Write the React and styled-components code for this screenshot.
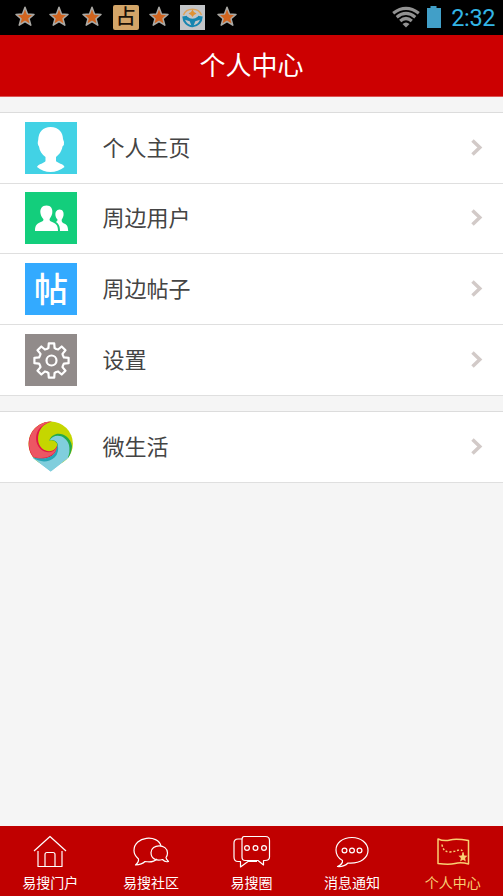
import React from "react";
import styled, { createGlobalStyle } from "styled-components";

const GlobalStyle = createGlobalStyle`
  * { box-sizing: border-box; }
  body { margin: 0; background: #f5f5f5; font-family: "Noto Sans CJK SC", sans-serif; }
`;

const Screen = styled.div`
  display: flex;
  flex-direction: column;
  width: 503px;
  height: 896px;
  overflow: hidden;
  background: #f5f5f5;
`;

const StatusBar = styled.div`
  display: flex;
  justify-content: space-between;
  height: 35px;
  padding: 0 8px 0 12px;
  background: #000;
`;

const Notices = styled.div`
  display: flex;
  gap: 7.6px;
  padding-top: 5px;
  & > * { flex: none; }
`;

const Indicators = styled.div`
  display: flex;
  align-items: flex-start;
`;

const Icon = styled.svg`
  display: block;
  flex: none;
  overflow: visible;
`;

const GlyphBadge = styled.div`
  width: 26px;
  height: 25px;
  border-radius: 2px;
  background: #d3a568;
  color: #1b1207;
  font-size: 20px;
  font-weight: 500;
  line-height: 22px;
  text-align: center;
`;

const Clock = styled.span`
  margin-left: 7px;
  color: #33b5e5;
  font: 400 23.5px/36px Roboto, sans-serif;
  letter-spacing: -0.4px;
`;

const Header = styled.header`
  height: 62px;
  border-bottom: 1px solid #dc5555;
  background: #cc0001;
  color: #fff;
  font-size: 26px;
  line-height: 58px;
  text-align: center;
`;

const Group = styled.section`
  margin-top: 15px;
  border-top: 1px solid #dcdcdc;
`;

const Row = styled.div`
  display: flex;
  align-items: center;
  height: ${(p) => (p.$short ? 70 : 71)}px;
  padding: 0 20px ${(p) => (p.$short ? 1 : 0)}px 25px;
  border-bottom: 1px solid #dfdfdf;
  background: #fff;
`;

const Tile = styled.div`
  width: 52px;
  height: 52px;
  flex: none;
  background: ${(p) => p.$color};
  color: #fff;
  font-size: 34px;
  font-weight: 500;
  line-height: 49px;
  text-align: center;
`;

const RowLabel = styled.span`
  flex: 1;
  margin-left: 25.5px;
  padding-bottom: 5px;
  color: #444;
  font-size: 22px;
  line-height: 30px;
`;

const TabBar = styled.nav`
  display: flex;
  height: 70px;
  margin-top: auto;
  background: #c00000;
`;

const Tab = styled.div`
  display: flex;
  flex: 1;
  flex-direction: column;
  align-items: center;
  padding-top: 7px;
  color: ${(p) => (p.$active ? "#f9cf72" : "#fff")};
`;

const TabLabel = styled.span`
  margin-top: 3px;
  font-size: 14px;
  line-height: 20px;
`;

const Star = () => (
  <Icon width="26" height="25" viewBox="0 -0.7 26 25">
    <path d="M13 1.500 15.500 8.300 22 8.700 17 13 18.800 19.500 13 15.800 7.200 19.500 9 13 4 8.700 10.500 8.300Z" fill="#d2641e" stroke="#aaa9a5" strokeWidth="1.500" strokeLinejoin="round" />
  </Icon>
);

const Wheel = () => (
  <Icon width="26" height="25" viewBox="0 0 26 25">
    <path fill="#c3c5c8" d="M0 0h25v25H0z" />
    <path d="M3.500 10A9.500 8.500 0 0 1 21.500 10" fill="none" stroke="#dda35b" strokeWidth="1.500" />
    <path d="M2.300 11.500Q12.500 9.500 22.700 11.500A10.200 10.700 0 0 1 2.300 11.500Z" fill="#1685b0" />
    <path d="M5 14.800 9.700 16.300 11.300 20.300Q7 19.500 5 14.800ZM20 14.800 15.300 16.300 13.700 20.300Q18 19.500 20 14.800Z" fill="#c3c5c8" />
    <path d="M7 11.500Q12.500 16 18 11.500V9H7Z" fill="#c3c5c8" />
    <path d="m12.500 4.500 1.500 2.400 2.500 1.500-2.500 1.500-1.500 2-1.500-2-2.500-1.500 2.500-1.500Z" fill="#df9235" />
  </Icon>
);

const Wifi = () => (
  <Icon width="30" height="35" viewBox="-1 0 30 35">
    <g fill="none" stroke="#929292" strokeWidth="3.200">
      <path d="M2.200 13.200Q15 3.500 27.800 13.200" />
      <path d="M5.700 17.200Q15 9.700 24.300 17.200" />
      <path d="M9.200 21Q15 16 20.800 21" />
    </g>
    <path d="M11.500 24Q15 21 18.500 24L15 27.500Z" fill="#929292" />
  </Icon>
);

const Battery = () => (
  <Icon width="24" height="35" viewBox="0 0 24 35">
    <path d="M7 8h3.500V6h6v2H21v20H7Z" fill="#419fc8" />
  </Icon>
);

const Person = () => (
  <Icon width="52" height="52" viewBox="0 0 52 52">
    <path fill="#fff" d="M25.500 5C34 5 38 11 38 17L39 20Q39.500 23 37.500 24.500C36.500 30 34 32.500 31 35V39C32 41 39 42 39.500 45Q33 50 25.500 50T12 45C13 42 20 41 20.500 39V35C17 32.500 14.500 29 14 24.500Q12 22 13.200 18C13.500 10 18 5 25.500 5Z" />
  </Icon>
);

const People = () => (
  <Icon width="52" height="52" viewBox="0 0 52 52">
    <path fill="#fff" d="M21.500 13.500C26 13.500 28 17 27.200 21.500 26.500 24.500 25 26 24.500 27.200Q24.500 29 26 29.600C31 31.500 33 33 33 39H10C10 33 12 31.500 17 29.600Q18.500 29 18.500 27.200C17.500 26 16 24.500 15.500 21.500 14.700 17 17 13.500 21.500 13.500Z" />
    <path fill="#fff" d="M34.500 17.500C38 17.500 39 20.500 38.500 23.500 38 26 37 27 36.600 28Q36.400 30.500 38.500 31.300C42 32.500 43 34.500 43.200 39H35C35 34 33.500 31.500 30.800 30Q32.800 29 32.500 27.500C30 25 30 21 31 19.500Q32.200 17.500 34.500 17.500Z" />
  </Icon>
);

const gearOutline = (() => {
  const points = [];
  for (let i = 0; i < 8; i += 1) {
    [[-22, 12.500], [-14, 12.800], [-9, 17.300], [9, 17.300], [14, 12.800], [22, 12.500]].forEach(([offset, radius]) => {
      const angle = ((i * 45 + offset - 90) * Math.PI) / 180;
      points.push(`${(26.5 + radius * Math.cos(angle)).toFixed(2)},${(26.5 + radius * Math.sin(angle)).toFixed(2)}`);
    });
  }
  return points.join(" ");
})();

const Gear = () => (
  <Icon width="52" height="52" viewBox="0 0 52 52" fill="none" stroke="#fff" strokeWidth="2.200" strokeLinejoin="round">
    <polygon points={gearOutline} />
    <circle cx="26.500" cy="26.500" r="5" />
  </Icon>
);

const Swirl = () => (
  <Icon width="52" height="52" viewBox="0 0 52 52">
    <path d="M8 37 25.700 50.500 43.500 36.500 40 20 12 24Z" fill="#80cedd" />
    <circle cx="25.700" cy="22.700" r="22.200" fill="#c5d600" />
    <path d="M24.300 19.500C28 9 44 11 47 25Q46.500 32 43.500 36.500L30 34Z" fill="#25a94b" />
    <path d="M24.300 20C29 11.500 41 14 44 24Q45.500 31 42.500 37.500L25.700 50.500 8 37 22 36 31 30Q34.500 24 31.500 21 28 17.500 24.300 20Z" fill="#80cedd" />
    <path d="M24 19.800Q29 18 32 22.500L33 27 24 32Z" fill="#c5d600" />
    <path d="M27 .6A22.200 22.200 0 0 0 8 36C17 40 27 37 30.500 31Q32.500 27 32.300 23C31.500 29 26 31 21.500 29.800 14 27.500 12 20 13.500 13.500 15.500 6 20 2.500 27 .6Z" fill="#df1745" />
    <path d="M26 .5A22.200 22.200 0 0 0 8 35.500C17 39 27 36 30.500 30Q31.800 27.500 32 26C29.500 31 24 32.200 19.500 30.500 12.500 27.500 10 20 11.500 13.500 13.500 6.500 19 2.500 26 .5Z" fill="#ed5663" />
    <path d="M7.500 36C17 39.500 27 37 30.500 31Q32.500 27 32.300 23 35 31 29.500 36.500C23 42 14 41.500 7.500 36Z" fill="#25a4b5" />
  </Icon>
);

const Chevron = () => (
  <Icon width="14" height="20" viewBox="0 0 14 20">
    <path d="m3.500 2.500 7.300 7L3.500 16.500" fill="none" stroke="#d2cac8" strokeWidth="3.500" />
  </Icon>
);

const tabIcons = {
  home: (
    <>
      <path d="M4 18 20 3.500 36 18M8 18V33.500H32V18M15 33.500V21.500Q15 19.500 17 19.500H23Q25 19.500 25 21.500V33.500" />
    </>
  ),
  chat: (
    <>
      <path d="M30 13C27 1 3 3 3 17.500Q3 22 7.500 26 8 29 4.500 32 11 31.500 14 28.500 22 30 26 26" />
      <path d="M36.500 20C36.500 10.500 20 10.500 20 19.500 20 27 27 28 31.500 26.500Q34 29.500 37.500 28.500 35 26 35 24.500 36.500 22.500 36.500 20Z" />
    </>
  ),
  circle: (
    <>
      <path d="M13 3.500H34.500Q38.500 3.500 38.500 7.500V24Q38.500 27.500 34 27.500H32.500V32L27 27.500H14Q11 27.500 11 24V7Q11 3.500 13 3.500Z" />
      <path d="M11 6H7Q3 6 3 10V24Q3 28.500 7 28.500H9.500V34L17 28.500H26" />
      <circle cx="16" cy="15" r="2.400" /><circle cx="24.500" cy="15" r="2.400" /><circle cx="33" cy="15" r="2.400" />
    </>
  ),
  message: (
    <>
      <path d="M20 4.500C10 4.500 4 10.500 4 17Q4 24 10.500 27.500 11 31 5.500 33.500 12 34 16 30C29 31 36 24.500 36 17.500 36 10 29 4.500 20 4.500Z" />
      <circle cx="12.500" cy="17.500" r="2.400" /><circle cx="20" cy="17.500" r="2.400" /><circle cx="27.500" cy="17.500" r="2.400" />
    </>
  ),
  map: (
    <>
      <path d="M5 6Q11 8.500 17 7T35.500 7.500V31Q28 29 22 30.500T5 30.500Z" strokeWidth="1.500" />
      <path d="M9 11.500Q10 19 17 19 22 18.500 26 17 30.500 16 30 22" strokeDasharray="2 1.800" strokeWidth="1.500" />
      <path fill="currentColor" stroke="none" d="m30 19.500 1.300 3 3.200.3-2.400 2.300.7 3.400-2.800-1.700-2.900 1.700.8-3.400-2.500-2.300 3.300-.3Z" />
    </>
  ),
};

const tabs = [
  ["home", "易搜门户"],
  ["chat", "易搜社区"],
  ["circle", "易搜圈"],
  ["message", "消息通知"],
  ["map", "个人中心"],
];

const MenuRow = ({ label, color = "transparent", short, children }) => (
  <Row $short={short}>
    <Tile $color={color}>{children}</Tile>
    <RowLabel>{label}</RowLabel>
    <Chevron />
  </Row>
);

export default function App() {
  return (
    <Screen>
      <GlobalStyle />
      <StatusBar>
        <Notices>
          <Star /><Star /><Star />
          <GlyphBadge>占</GlyphBadge>
          <Star /><Wheel /><Star />
        </Notices>
        <Indicators>
          <Wifi /><Battery /><Clock>2:32</Clock>
        </Indicators>
      </StatusBar>
      <Header>个人中心</Header>
      <Group>
        <MenuRow label="个人主页" color="#42d2e5"><Person /></MenuRow>
        <MenuRow label="周边用户" color="#13ce7c" short><People /></MenuRow>
        <MenuRow label="周边帖子" color="#33aaff">帖</MenuRow>
        <MenuRow label="设置" color="#918b8a"><Gear /></MenuRow>
      </Group>
      <Group>
        <MenuRow label="微生活"><Swirl /></MenuRow>
      </Group>
      <TabBar>
        {tabs.map(([icon, label]) => (
          <Tab key={icon} $active={icon === "map"}>
            <Icon width="40" height="36" viewBox="0 0 40 36" fill="none" stroke="currentColor" strokeWidth="1.200" strokeLinejoin="round">
              {tabIcons[icon]}
            </Icon>
            <TabLabel>{label}</TabLabel>
          </Tab>
        ))}
      </TabBar>
    </Screen>
  );
}
